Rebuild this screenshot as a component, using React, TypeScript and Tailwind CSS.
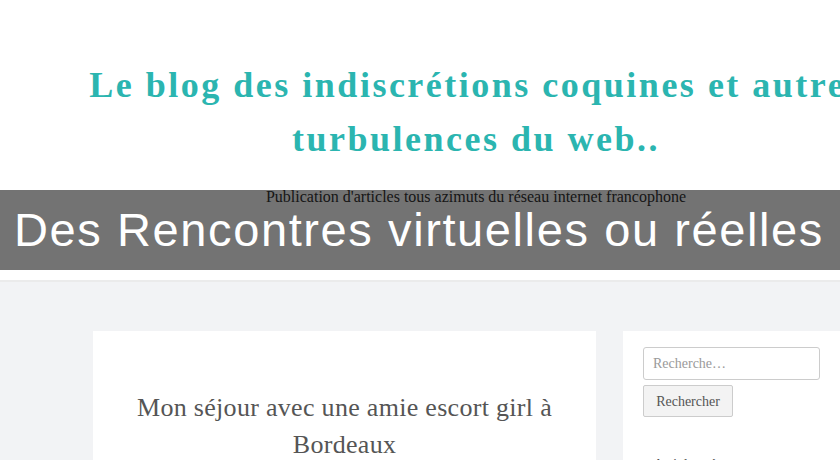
export default function App() {
  return (
    <div className="relative w-[840px] h-[460px] overflow-hidden bg-white font-['Liberation_Serif',serif]">
      <header className="h-[270px] bg-white">
        <div className="w-[952px] pt-[58px] text-center">
          <h1 className="text-[36px] leading-[54px] font-bold tracking-[2.5px] text-[#2bb5b0] whitespace-nowrap">
            Le blog des indiscrétions coquines et autres
            <br />
            turbulences du web..
          </h1>
          <p className="mt-[21px] text-[16px] leading-[20px] text-[#333]">
            Publication d'articles tous azimuts du réseau internet francophone
          </p>
        </div>
      </header>

      <div className="absolute left-0 top-[190px] w-full h-[80px] bg-black/55 pl-[14px]">
        <span className="block text-[47px] leading-[80px] tracking-[1.6px] text-white font-['Liberation_Sans',Arial,sans-serif] whitespace-nowrap">
          Des Rencontres virtuelles ou réelles
        </span>
      </div>

      <div className="h-[10px] bg-white" />
      <main className="h-[180px] border-t-2 border-[#ebebeb] bg-[#f2f3f5] flex pl-[93px] pt-[49px] gap-[27px]">
        <article className="w-[503px] bg-white pt-[58px] text-center">
          <h2 className="text-[26px] leading-[37px] tracking-[0.3px] text-[#555] px-[30px]">
            Mon séjour avec une amie escort girl à Bordeaux
          </h2>
        </article>
        <aside className="flex-1 bg-white pl-[20px] pt-[16px]">
          <input
            type="search"
            placeholder="Recherche…"
            className="block w-[177px] h-[33px] border border-[#ccc] rounded-[3px] px-[9px] text-[14px] text-[#555] placeholder:text-[#9a9a9a] outline-none"
          />
          <button className="mt-[5px] w-[90px] h-[32px] border border-[#ccc] rounded-[2px] bg-[#f3f3f3] text-[14px] text-[#555]">
            Rechercher
          </button>
          <h3 className="mt-[36px] pl-[10px] text-[15px] text-[#555]">Articles récents</h3>
        </aside>
      </main>
    </div>
  );
}
